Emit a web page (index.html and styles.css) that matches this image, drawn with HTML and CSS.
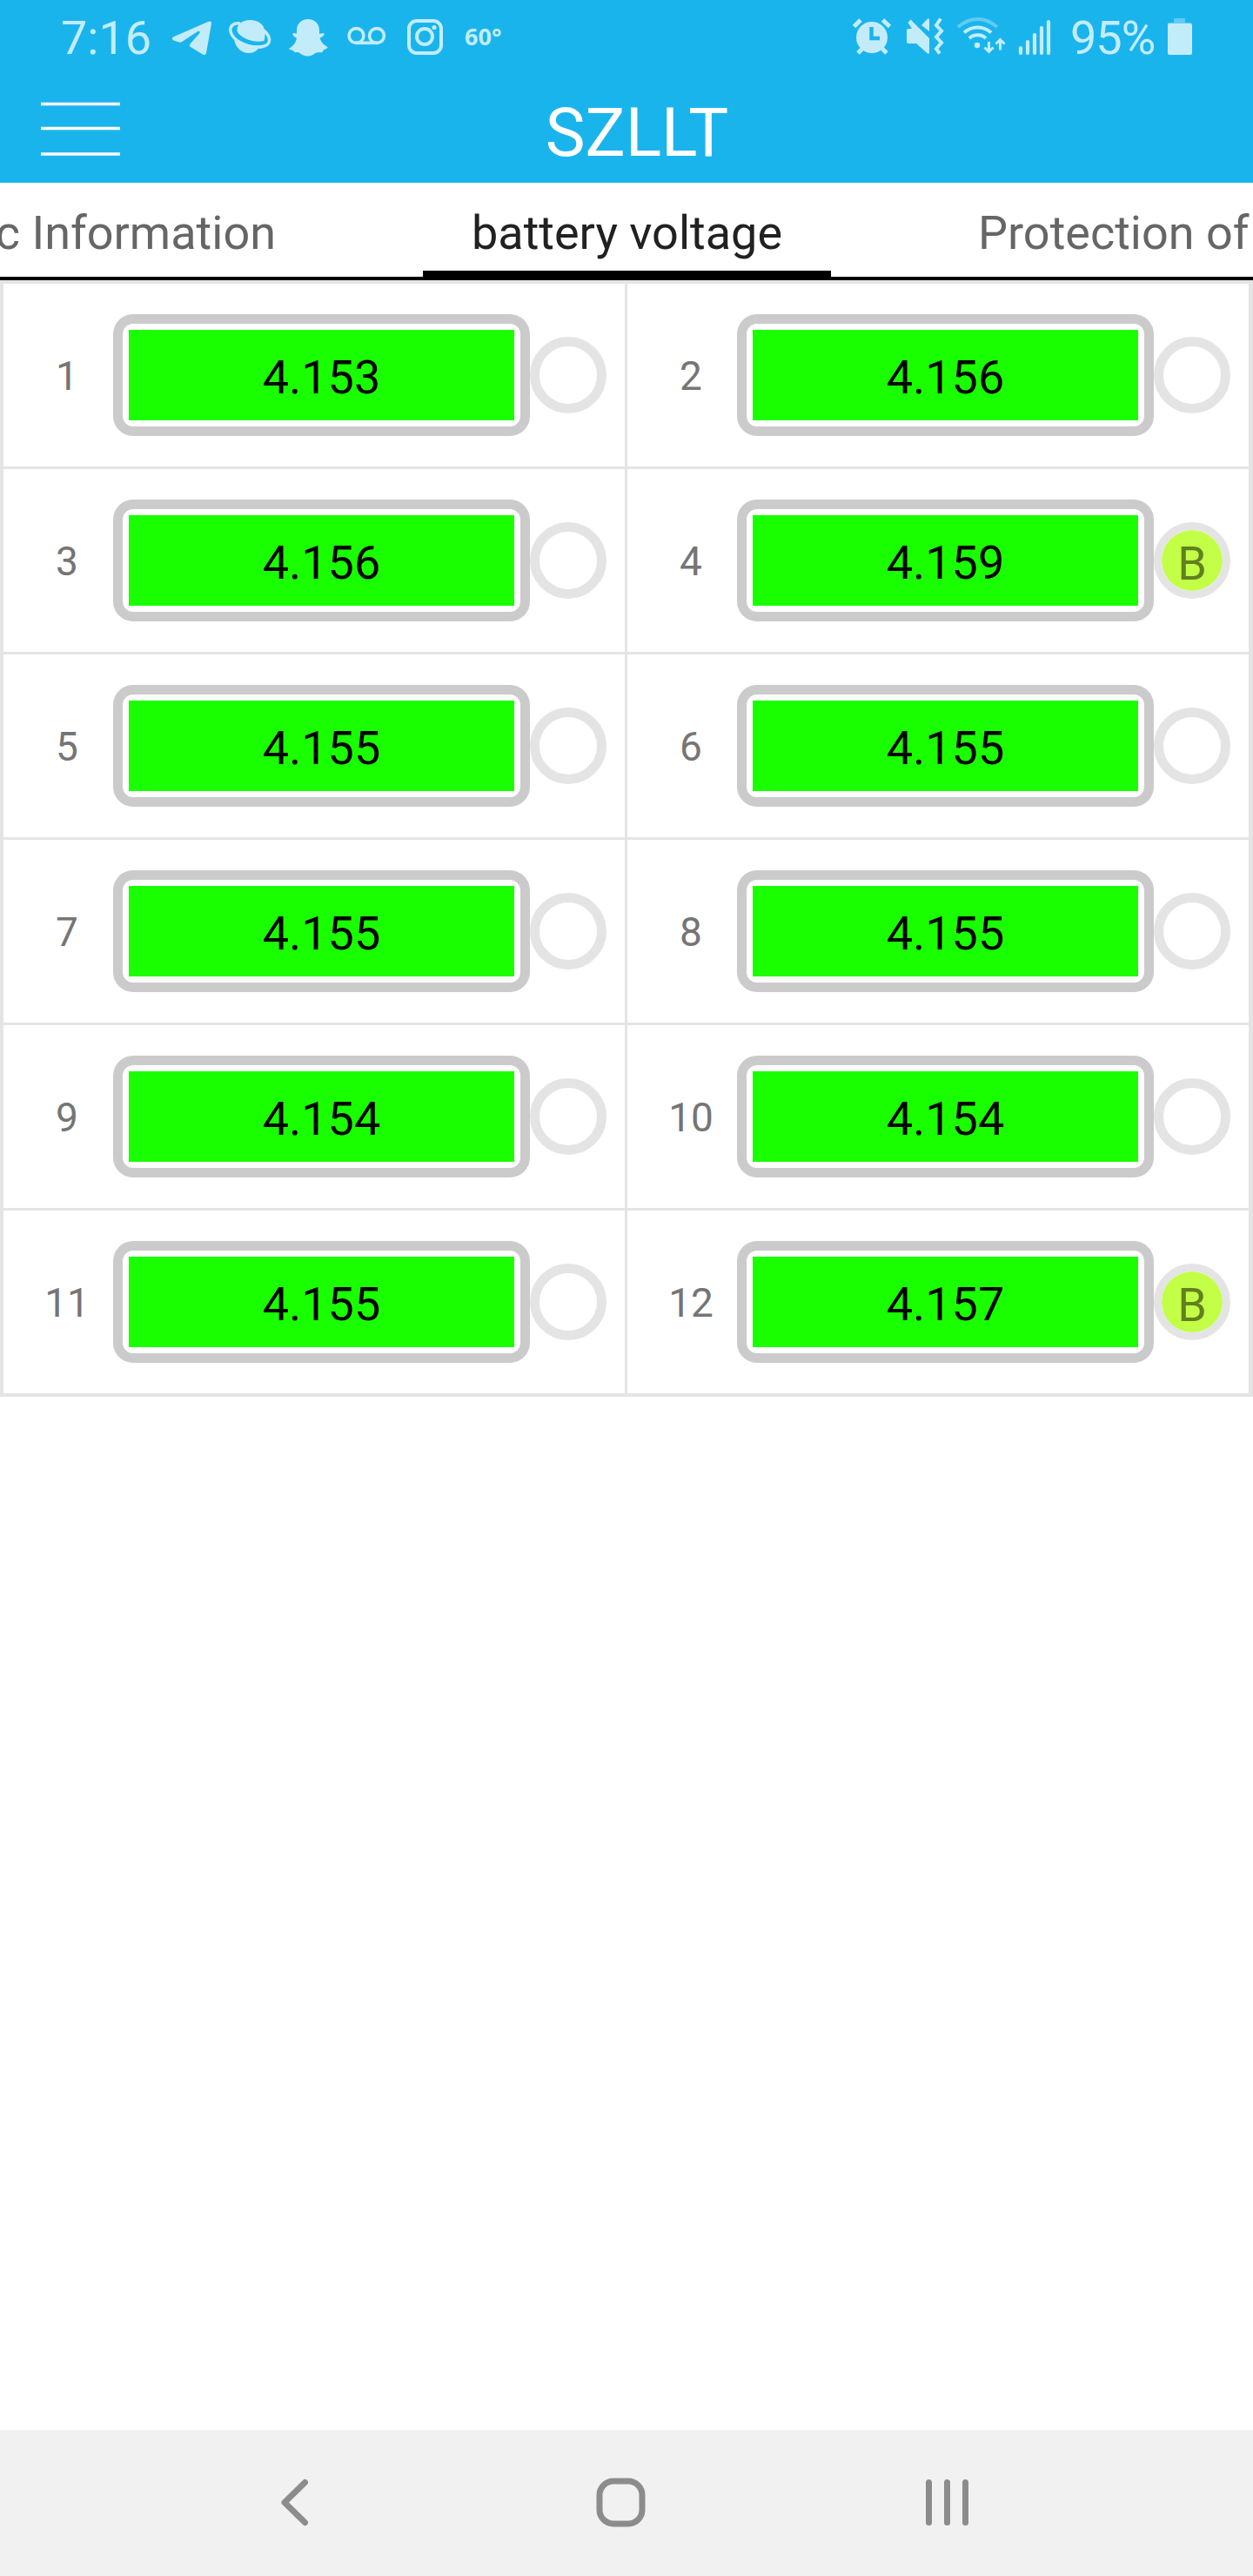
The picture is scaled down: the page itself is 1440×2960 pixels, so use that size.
FILE: index.html
```html
<!DOCTYPE html>
<html lang="en">
<head>
<meta charset="utf-8">
<title>SZLLT</title>
<link rel="stylesheet" href="styles.css">
</head>
<body>
<div class="screen">
  <header class="top">
    <div class="status">
      <span class="clock">7:16</span>
      <svg class="status-icons-left" width="390" height="84" viewBox="190 0 390 84" fill="#c3ecfb">
        <path d="M199 42.5 239 25q4-1.500 4 2L237 61q-1 3-4 1.500L219 54q-2-1.500-.5-3.500L229.500 38q1-3-2-2L209 48q-1.500 1-3 .5l-6.500-2q-3-2 -.5-4z"/>
        <path d="M272.500 36c-1-8 6-13 15-13 9 0 16 5 17 13 .5 5-.5 8-1 11-12 3-27-3-31-11z"/>
        <path d="M269 44c7 6 18 9.500 31 8.500-4 5-8 8.500-14 8.500-9 0-16-7-17-17z"/>
        <path d="M276 27c-8-1-12 3-11 9 2 10 17 18 31 18 9 0 14-3 13.500-9-.4-4-3-7-6-10" fill="none" stroke="#c3ecfb" stroke-width="3.500"/>
        <path d="M354 22c8 0 13 5.500 13 13v4c2 0 5-2 5.500 0 .5 2-3 3.500-5 5 2 5 5 8 9 10-.5 3-4 2-5 4-1 4-6 1-9 3-3 2-5 3.500-9 3.500s-6-1.500-9-3.500c-3-2-5 0-6-1-1-3-5-2-6.500-4 5-3 8-7 9-12-2-1.500-5-3-4.500-5 .5-2 3 0 4.500-.5V35c0-7.500 5-13 13-13z"/>
        <g fill="none" stroke="#c3ecfb" stroke-width="3.600"><circle cx="409.500" cy="41" r="8.400"/><circle cx="433" cy="41" r="8.400"/><path d="M409 49.300h24"/></g>
        <g fill="none" stroke="#c3ecfb" stroke-width="4"><rect x="470" y="24" width="37" height="37" rx="9"/><circle cx="488" cy="42" r="9"/></g>
        <circle cx="499" cy="31.500" r="2.600"/>
      </svg>
      <span class="temp">60°</span>
      <svg class="status-icons-right" width="240" height="84" viewBox="970 0 240 84" fill="#c3ecfb">
        <circle cx="1002" cy="43" r="18"/>
        <path d="M981.500 30.500 989 23m25.500 0 8 7.500M991 56l-5 5m28-5 5 5" fill="none" stroke="#c3ecfb" stroke-width="5"/>
        <path d="M1001.500 31v13h9.500" fill="none" stroke="#1ab4ed" stroke-width="4.500"/>
        <path d="M1044 33h4l-4.500-7 3-3.500L1068 44v17.500h-2L1053 50h-9q-2 0-2-2V35q0-2 2-2zM1059 29l7-7.500h2V36z"/>
        <path d="m1081 21.500-5 7.500 6 6.500-6 7 6 6.500-6 7 4 5.500" fill="none" stroke="#c3ecfb" stroke-width="4"/>
        <g fill="none" stroke="#c3ecfb" stroke-width="4"><path d="M1101 31c14-12 31-12 45 0" opacity=".42"/><path d="M1108 37.500c9-8 22-8 31 0"/><path d="M1114 44c5-5 14-5 19 0"/></g>
        <circle cx="1123" cy="52" r="3.200"/>
        <path d="M1136.500 48v11m-5-4.500 5 5 5-5M1149.500 57.500V46m-5 4.500 5-5 5 5" fill="none" stroke="#c3ecfb" stroke-width="3"/>
        <path d="M1173 55v6m8-13v13m8-21v21m8-29v29m8-36v36" stroke="#c3ecfb" stroke-width="4.200" stroke-linecap="round"/>
      </svg>
      <span class="percent">95%</span>
      <svg class="battery" width="30" height="44" viewBox="0 0 30 44" fill="#c3ecfb">
        <path d="M8 1h13v5h7v2H1V6h7z" opacity=".42"/><rect x="1" y="7" width="28" height="36" rx="2"/>
      </svg>
    </div>
    <div class="titlebar">
      <svg class="menu" width="91" height="64" viewBox="0 0 91 64"><path d="M0 4.500h91M0 32.500h91M0 62h91" stroke="#fff" stroke-width="3.500"/></svg>
      <h1 class="title">SZLLT</h1>
    </div>
  </header>
  <nav class="tabs">
    <span class="tab tab-prev">Basic Information</span>
    <span class="tab tab-active">battery voltage</span>
    <span class="tab tab-next">Protection of</span>
  </nav>
  <main class="cells">
    <div class="cell"><span class="num">1</span><div class="box"><span class="volt">4.153</span></div><span class="dot"></span></div>
    <div class="cell"><span class="num">2</span><div class="box"><span class="volt">4.156</span></div><span class="dot"></span></div>
    <div class="cell"><span class="num">3</span><div class="box"><span class="volt">4.156</span></div><span class="dot"></span></div>
    <div class="cell"><span class="num">4</span><div class="box"><span class="volt">4.159</span></div><span class="dot dot-on">B</span></div>
    <div class="cell"><span class="num">5</span><div class="box"><span class="volt">4.155</span></div><span class="dot"></span></div>
    <div class="cell"><span class="num">6</span><div class="box"><span class="volt">4.155</span></div><span class="dot"></span></div>
    <div class="cell"><span class="num">7</span><div class="box"><span class="volt">4.155</span></div><span class="dot"></span></div>
    <div class="cell"><span class="num">8</span><div class="box"><span class="volt">4.155</span></div><span class="dot"></span></div>
    <div class="cell"><span class="num">9</span><div class="box"><span class="volt">4.154</span></div><span class="dot"></span></div>
    <div class="cell"><span class="num">10</span><div class="box"><span class="volt">4.154</span></div><span class="dot"></span></div>
    <div class="cell"><span class="num">11</span><div class="box"><span class="volt">4.155</span></div><span class="dot"></span></div>
    <div class="cell"><span class="num">12</span><div class="box"><span class="volt">4.157</span></div><span class="dot dot-on">B</span></div>
  </main>
  <footer class="navbar">
    <svg width="800" height="60" viewBox="320 2846 800 60" fill="none" stroke="#8c8c8c" stroke-width="7" stroke-linecap="round" stroke-linejoin="round">
      <path d="M350.500 2852.500 327 2875.500l23.500 23"/>
      <rect x="689" y="2851" width="49" height="49" rx="16"/>
      <path d="M1067.500 2852.500v46M1088.500 2852.500v46M1109.500 2852.500v46"/>
    </svg>
  </footer>
</div>
</body>
</html>
```
FILE: styles.css
```css
* { box-sizing: border-box; }
body { margin: 0; background: #fff; font-family: Roboto, "Liberation Sans", sans-serif; }
.screen { display: flex; flex-direction: column; width: 1440px; height: 2960px; overflow: hidden; }
.top { height: 210px; background: #1ab4ed; }
.status { display: flex; align-items: center; height: 84px; padding-left: 70px; color: #c3ecfb; }
.status svg { flex: none; }
.clock { width: 120px; font-size: 54px; line-height: 84px; padding-top: 3px; white-space: nowrap; }
.status-icons-left { margin-right: -46px; }
.temp { width: 436px; font: 700 27px "Noto Sans", sans-serif; line-height: 84px; }
.percent { width: 111px; margin-left: 20px; font-size: 54px; line-height: 84px; padding-top: 3px; letter-spacing: -1px; }
.battery { margin-left: 0; }
.titlebar { display: grid; grid-template-columns: 91px 1fr 91px; align-items: center; height: 126px; padding: 0 47px; }
.title { margin: 0; padding: 12px 0 0 24px; color: #fff; font-size: 77px; font-weight: 400; line-height: 114px; text-align: center; }
.tabs { display: flex; height: 112px; border-bottom: 4px solid #000; font-size: 54px; line-height: 115px; color: #666; white-space: nowrap; }
.tab { flex: none; height: 108px; }
.tab-prev { display: flex; justify-content: flex-end; width: 486px; padding-right: 169px; }
.tab-active { width: 469px; border-bottom: 7px solid #000; color: #212121; text-align: center; }
.tab-next { padding-left: 169px; }
.cells { display: grid; grid-template-columns: 714px 714px; grid-auto-rows: 210px; gap: 3px; padding: 4px 5px 4px 4px; background: #e4e4e4; }
.cell { display: flex; align-items: center; background: #fff; }
.num { width: 126px; padding: 2px 0 0 20px; color: #757575; font-size: 46px; text-align: center; }
.box { width: 479px; height: 140px; padding: 7px; border: 11px solid #cbcbcb; border-radius: 23px; }
.volt { display: block; height: 104px; background: #1aff00; color: #000; font-size: 54px; line-height: 109px; text-align: center; }
.dot { width: 88px; height: 88px; border: 11px solid #e4e4e4; border-radius: 50%; }
.dot-on { border-width: 9px; background: #c2ff46; background-clip: padding-box; color: #61801f; font-size: 54px; line-height: 78px; text-align: center; }
.navbar { display: flex; align-items: flex-start; height: 168px; margin-top: auto; padding: 54px 0 0 320px; background: #f1f1f1; }
```
